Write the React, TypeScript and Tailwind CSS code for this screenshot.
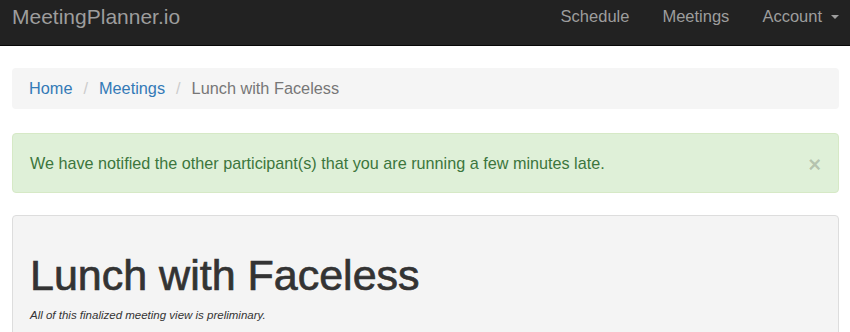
// Meeting view — navbar, breadcrumb, late notice, meeting panel
export default function App() {
  return (
    <div className="min-h-screen bg-white font-['Liberation_Sans',Arial,sans-serif]">
      {/* ── Navbar ── */}
      <nav className="h-[46px] bg-[#222222] border-b border-[#080808] flex items-start justify-between pl-3 pr-[11px]">
        <a className="text-[21px] leading-none text-[#9d9d9d] pt-[6px]">MeetingPlanner.io</a>
        <ul className="flex items-start text-[16.5px] leading-none text-[#9d9d9d] pt-[8px]">
          <li className="mr-[33px]">Schedule</li>
          <li className="mr-[33px]">Meetings</li>
          <li className="flex items-center">
            Account
            <span className="ml-[9px] mt-[1px] w-0 h-0 border-x-[4px] border-x-transparent border-t-[4px] border-t-[#9d9d9d]" />
          </li>
        </ul>
      </nav>

      <div className="px-3 pt-[22px]">
        {/* ── Breadcrumb ── */}
        <ol className="h-[41px] bg-[#f5f5f5] rounded-[4px] flex items-center px-[17px] text-[16.3px] mr-[-1px]">
          <li className="text-[#337ab7]">Home</li>
          <li className="text-[#cccccc] px-[11px]">/</li>
          <li className="text-[#337ab7]">Meetings</li>
          <li className="text-[#cccccc] px-[11px]">/</li>
          <li className="text-[#777777]">Lunch with Faceless</li>
        </ol>

        {/* ── Alert ── */}
        <div className="mt-[24px] h-[60px] bg-[#dff0d8] border border-[#d6e9c6] rounded-[4px] flex items-center justify-between pl-[17px] pr-[17px] mr-[-1px]">
          <span className="text-[16.2px] text-[#3c763d] mt-[1px]">
            We have notified the other participant(s) that you are running a few minutes late.
          </span>
          <span className="text-[22px] font-bold leading-none text-black/20 mt-[4px]">×</span>
        </div>

        {/* ── Meeting panel ── */}
        <div className="mt-[22px] h-[140px] bg-[#f4f4f4] border border-[#dddddd] rounded-[4px] px-[17px] pt-[38px] mr-[-1px]">
          <h1 className="text-[43px] leading-none text-[#333333] [-webkit-text-stroke:0.7px_#333333]">Lunch with Faceless</h1>
          <p className="mt-[10px] text-[11.5px] italic text-[#333333]">All of this finalized meeting view is preliminary.</p>
        </div>
      </div>
    </div>
  );
}
